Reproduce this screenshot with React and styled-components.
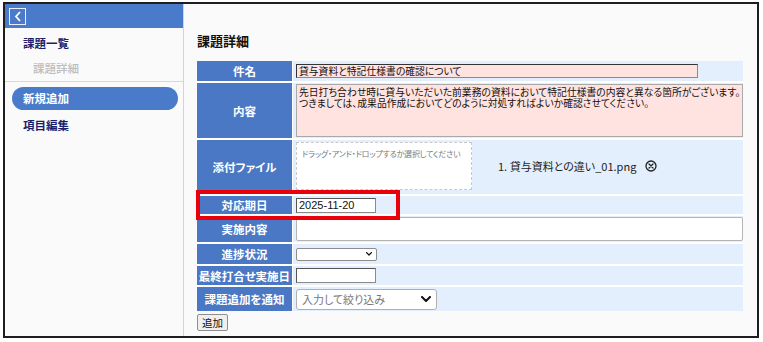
import styled, { createGlobalStyle } from "styled-components"

const GlobalStyle = createGlobalStyle`
  html, body {
    margin: 0;
    background: #ffffff;
  }
  body {
    font-family: "Noto Sans CJK JP", "Noto Sans", sans-serif;
    font-feature-settings: "palt";
  }
`

const rows = [
    { label: "件名", height: 20 },
    { label: "内容", height: 55 },
    { label: "添付ファイル", height: 54 },
    { label: "対応期日", height: 18, marked: true },
    { label: "実施内容", height: 26 },
    { label: "進捗状況", height: 20 },
    { label: "最終打合せ実施日", height: 19 },
    { label: "課題追加を通知", height: 24 },
]

function Chevron({ size = 9, weight = 2 }) {
    return (
        <svg width={size} height={size * 0.6} viewBox="0 0 10 6">
            <path d="M1 1 L5 5 L9 1" fill="none" stroke="#111" strokeWidth={weight} strokeLinecap="round" strokeLinejoin="round" />
        </svg>
    )
}

function CloseCircle() {
    return (
        <svg width="12" height="12" viewBox="0 0 12 12">
            <circle cx="6" cy="6" r="5" fill="none" stroke="#222" strokeWidth="1.3" />
            <path d="M4 4 L8 8 M8 4 L4 8" stroke="#222" strokeWidth="1.3" strokeLinecap="round" />
        </svg>
    )
}

function renderValue(label) {
    switch (label) {
        case "件名":
            return <TitleInput readOnly value="貸与資料と特記仕様書の確認について" />
        case "内容":
            return (
                <ContentBox>
                    先日打ち合わせ時に貸与いただいた前業務の資料において特記仕様書の内容と異なる箇所がございます。<br />
                    つきましては、成果品作成においてどのように対処すればよいか確認させてください。
                </ContentBox>
            )
        case "添付ファイル":
            return (
                <AttachRow>
                    <DropZone>ドラッグ・アンド・ドロップするか選択してください</DropZone>
                    <FileName>1. 貸与資料との違い_01.png</FileName>
                    <CloseCircle />
                </AttachRow>
            )
        case "対応期日":
            return <DateInput readOnly value="2025-11-20" />
        case "実施内容":
            return <WideInput readOnly value="" />
        case "進捗状況":
            return (
                <SmallSelect>
                    <Chevron size={6} weight={2.2} />
                </SmallSelect>
            )
        case "最終打合せ実施日":
            return <DateInput readOnly value="" />
        default:
            return (
                <FilterSelect>
                    <span>入力して絞り込み</span>
                    <Chevron size={10} weight={2} />
                </FilterSelect>
            )
    }
}

export default function App() {
    return (
        <>
            <GlobalStyle />
            <Frame>
                <Sidebar>
                    <SideHeader>
                        <BackButton>
                            <svg width="8" height="11" viewBox="0 0 8 11">
                                <path d="M6 1 L2 5.5 L6 10" fill="none" stroke="#fff" strokeWidth="1.8" />
                            </svg>
                        </BackButton>
                    </SideHeader>
                    <NavItem>課題一覧</NavItem>
                    <NavItem $sub>課題詳細</NavItem>
                    <Divider />
                    <NavItem $active>新規追加</NavItem>
                    <NavItem>項目編集</NavItem>
                </Sidebar>
                <Main>
                    <Heading>課題詳細</Heading>
                    <FormGrid>
                        {rows.map((row) => (
                            <Row key={row.label} $h={row.height}>
                                <Label>
                                    {row.label}
                                    {row.marked && <Mark />}
                                </Label>
                                <Value>{renderValue(row.label)}</Value>
                            </Row>
                        ))}
                    </FormGrid>
                    <AddButton>追加</AddButton>
                </Main>
            </Frame>
        </>
    )
}

const Frame = styled.div`
    margin: 2px 0 0 3px;
    width: 752px;
    height: 332px;
    border: 2px solid #1e1e1e;
    display: flex;
    background: #fafafa;
    overflow: hidden;
`

const Sidebar = styled.div`
    width: 178px;
    flex-shrink: 0;
    border-right: 1px solid #d4d4d4;
    display: flex;
    flex-direction: column;
`

const SideHeader = styled.div`
    height: 24px;
    background: #4a7bcb;
    display: flex;
    align-items: center;
    padding-left: 4px;
    margin-bottom: 3px;
`

const BackButton = styled.div`
    width: 15px;
    height: 15px;
    border: 1px solid #e8eefa;
    display: flex;
    align-items: center;
    justify-content: center;
`

const NavItem = styled.div`
    height: ${(p) => (p.$active ? "23px" : "24px")};
    line-height: ${(p) => (p.$active ? "23px" : "24px")};
    font-size: 11.5px;
    color: ${(p) => (p.$sub ? "#bdbdbd" : p.$active ? "#ffffff" : "#1b1f6e")};
    padding-left: ${(p) => (p.$sub ? "28px" : p.$active ? "11px" : "18px")};
    margin: ${(p) => (p.$active ? "5px 5px 3px 7px" : p.$sub ? "1px 0 0" : "0")};
    background: ${(p) => (p.$active ? "#4a7bcb" : "transparent")};
    border-radius: ${(p) => (p.$active ? "12px" : "0")};
    font-weight: ${(p) => (p.$sub ? 500 : 700)};
`

const Divider = styled.div`
    border-top: 1px solid #d8d8d8;
    margin-top: 1px;
`

const Main = styled.div`
    flex: 1;
    padding: 0 14px 0 13px;
    display: flex;
    flex-direction: column;
    align-items: flex-start;
`

const Heading = styled.h2`
    margin: 29px 0 12px;
    font-size: 13px;
    line-height: 16px;
    font-weight: 700;
    color: #111;
`

const FormGrid = styled.div`
    align-self: stretch;
    display: flex;
    flex-direction: column;
    gap: 2px;
    background: #ffffff;
`

const Row = styled.div`
    display: grid;
    grid-template-columns: 95px 1fr;
    column-gap: 1px;
    height: ${(p) => p.$h}px;
`

const Label = styled.div`
    position: relative;
    background: #4a78c5;
    color: #ffffff;
    font-size: 11.5px;
    font-weight: 700;
    display: flex;
    align-items: center;
    justify-content: center;
    white-space: nowrap;
`

const Mark = styled.div`
    position: absolute;
    left: -1px;
    top: -6px;
    width: 196px;
    height: 22px;
    border: 4px solid #e8000b;
    pointer-events: none;
    z-index: 2;
`

const Value = styled.div`
    background: #e3effd;
    display: flex;
    align-items: center;
    padding: 0 0 0 3px;
    min-width: 0;
`

const fieldBase = `
    box-sizing: border-box;
    font-family: "Noto Sans CJK JP", "Noto Sans", sans-serif;
    font-feature-settings: "palt";
    outline: none;
    color: #111;
`

const TitleInput = styled.input`
    ${fieldBase}
    width: 402px;
    height: 14px;
    padding: 0 2px;
    font-size: 9.8px;
    background: #ffe3e0;
    border: 1px solid #8a8a8a;
    border-top-color: #333;
    border-left-color: #333;
`

const ContentBox = styled.div`
    ${fieldBase}
    align-self: stretch;
    flex: 1;
    margin: 1px 0 1px;
    padding: 2px 2px;
    font-size: 9.8px;
    line-height: 10.5px;
    background: #ffe3e0;
    border: 1px solid #a9a9a9;
    white-space: nowrap;
    overflow: hidden;
`

const AttachRow = styled.div`
    display: flex;
    align-items: center;
    align-self: stretch;
    padding: 2px 0 4px;
`

const DropZone = styled.div`
    box-sizing: border-box;
    width: 176px;
    height: 48px;
    background: #ffffff;
    border: 1px dashed #c8c8c8;
    font-size: 8px;
    letter-spacing: -0.2px;
    color: #7a7a7a;
    padding: 5px 0 0 5px;
    white-space: nowrap;
    overflow: hidden;
    margin-right: 26px;
`

const FileName = styled.span`
    font-size: 11px;
    color: #222;
    margin-right: 9px;
`

const DateInput = styled.input`
    ${fieldBase}
    width: 80px;
    height: 15px;
    padding: 0 2px;
    font-size: 11px;
    font-family: "Liberation Sans", Arial, sans-serif;
    background: #ffffff;
    border: 1px solid #8a8a8a;
    border-top-color: #555;
    border-left-color: #555;
`

const WideInput = styled.input`
    ${fieldBase}
    width: 100%;
    height: 24px;
    background: #ffffff;
    border: 1px solid #b4b4b4;
    border-radius: 2px;
`

const SmallSelect = styled.div`
    box-sizing: border-box;
    width: 81px;
    height: 13px;
    background: #ffffff;
    border: 1px solid #8d8d8d;
    border-radius: 2px;
    display: flex;
    align-items: center;
    justify-content: flex-end;
    padding-right: 4px;
`

const FilterSelect = styled.div`
    box-sizing: border-box;
    width: 141px;
    height: 21px;
    background: #ffffff;
    border: 1px solid #b0b0b0;
    border-radius: 3px;
    display: flex;
    align-items: center;
    justify-content: space-between;
    padding: 0 5px 0 5px;
    font-size: 11px;
    color: #777;
`

const AddButton = styled.button`
    margin-top: 3px;
    height: 17px;
    padding: 0 4px;
    font-family: "Noto Sans CJK JP", sans-serif;
    font-size: 10.5px;
    line-height: 15px;
    color: #111;
    background: #efefef;
    border: 1px solid #8f8f8f;
    border-radius: 2px;
`
